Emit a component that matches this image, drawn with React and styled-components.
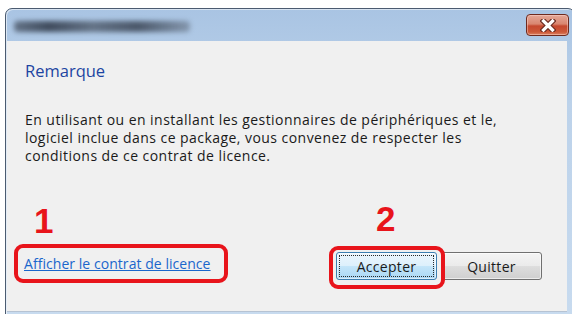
import styled, { createGlobalStyle } from 'styled-components';

const GlobalStyle = createGlobalStyle`
  html, body {
    margin: 0;
    padding: 0;
    background: #ffffff;
    overflow: hidden;
  }
  body {
    width: 572px;
    height: 314px;
    font-family: 'Open Sans', 'Noto Sans', sans-serif;
  }
`;

const App = () => {
  return (
    <>
      <GlobalStyle />
      <Screen>
        <Window>
          <TitleBar>
            <BlurredTitle aria-hidden="true" />
            <CloseButton aria-label="Fermer">
              <svg width="16" height="13" viewBox="0 0 16 13">
                <path
                  d="M3.5 2 L12.5 11 M12.5 2 L3.5 11"
                  stroke="#6b2c22"
                  strokeWidth="5.5"
                  strokeLinecap="square"
                />
                <path
                  d="M3.5 2 L12.5 11 M12.5 2 L3.5 11"
                  stroke="#ffffff"
                  strokeWidth="3.2"
                  strokeLinecap="square"
                />
              </svg>
            </CloseButton>
          </TitleBar>
          <Content>
            <Heading>Remarque</Heading>
            <Body>
              En utilisant ou en installant les gestionnaires de périphériques et le,
              <br />
              logiciel inclue dans ce package, vous convenez de respecter les
              <br />
              conditions de ce contrat de licence.
            </Body>
            <Footer>
              <Group offset={2}>
                <StepNumber indent={20}>1</StepNumber>
                <Highlight gap={6} pad="0 6px" width={214} height={39}>
                  <LicenseLink href="#">Afficher le contrat de licence</LicenseLink>
                </Highlight>
              </Group>
              <Group offset={0} spacing={101}>
                <StepNumber indent={47}>2</StepNumber>
                <ButtonRow>
                  <Highlight gap={10} pad="2px 4px 5px 3px">
                    <DialogButton primary>
                      <FocusRing>Accepter</FocusRing>
                    </DialogButton>
                  </Highlight>
                  <DialogButton side>
                    <span>Quitter</span>
                  </DialogButton>
                </ButtonRow>
              </Group>
            </Footer>
          </Content>
        </Window>
      </Screen>
    </>
  );
};

const Screen = styled.div`
  width: 572px;
  height: 314px;
  padding: 8px 0 0 5px;
  box-sizing: border-box;
  overflow: hidden;
`;

const Window = styled.div`
  width: 570px;
  height: 320px;
  box-sizing: border-box;
  border: 1px solid #4b5b70;
  border-radius: 7px 7px 0 0;
  background: linear-gradient(180deg, #a9c4e3 0%, #bcd2ea 30%, #c8dbef 100%);
  box-shadow: inset 1px 1px 0 rgba(255, 255, 255, 0.55);
  display: flex;
  flex-direction: column;
`;

const TitleBar = styled.div`
  height: 32px;
  display: flex;
  align-items: flex-start;
  justify-content: space-between;
  padding: 0 5px 0 8px;
`;

const BlurredTitle = styled.div`
  margin-top: 12px;
  width: 176px;
  height: 11px;
  border-radius: 4px;
  background: linear-gradient(
    90deg,
    rgba(60, 70, 85, 0.65) 0%,
    rgba(45, 55, 70, 0.85) 20%,
    rgba(70, 80, 95, 0.7) 45%,
    rgba(50, 60, 75, 0.8) 70%,
    rgba(85, 95, 110, 0.45) 100%
  );
  filter: blur(2.5px);
`;

const CloseButton = styled.button`
  margin-top: 5px;
  width: 43px;
  height: 22px;
  padding: 0;
  display: flex;
  align-items: center;
  justify-content: center;
  border: 1px solid #6e2a1e;
  border-radius: 4px;
  background: linear-gradient(
    180deg,
    #e4a797 0%,
    #d98670 45%,
    #c5482f 55%,
    #cc5838 85%,
    #dc8464 100%
  );
  box-shadow: inset 0 0 0 1px rgba(255, 220, 210, 0.45);
`;

const Content = styled.div`
  height: 271px;
  margin: 0 7px 0 1px;
  background: #f0f0f0;
  border-bottom: 1px solid #b6c3d3;
  box-sizing: border-box;
  padding: 18px 0 0 18px;
  display: flex;
  flex-direction: column;
`;

const Heading = styled.h1`
  margin: 0;
  font-size: 16.5px;
  line-height: 24px;
  font-weight: 400;
  color: #1d45a2;
`;

const Body = styled.p`
  margin: 28px 0 0;
  font-size: 14px;
  letter-spacing: 0.45px;
  line-height: 18px;
  color: #1a1a1a;
  white-space: nowrap;
`;

const Footer = styled.div`
  margin: 36px 0 0 -11px;
  display: flex;
  align-items: flex-start;
`;

const Group = styled.div`
  display: flex;
  flex-direction: column;
  align-items: flex-start;
  padding-top: ${({ offset }) => offset}px;
  margin-left: ${({ spacing }) => spacing || 0}px;
`;

const StepNumber = styled.div`
  padding-left: ${({ indent }) => indent}px;
  font-family: 'Liberation Sans', Arial, sans-serif;
  font-weight: 700;
  font-size: 35px;
  line-height: 35px;
  color: #e8141b;
`;

const Highlight = styled.div`
  position: relative;
  z-index: 1;
  margin-top: ${({ gap }) => gap}px;
  display: flex;
  align-items: center;
  width: ${({ width }) => (width ? `${width}px` : 'auto')};
  height: ${({ height }) => (height ? `${height}px` : 'auto')};
  box-sizing: border-box;
  padding: ${({ pad }) => pad};
  border: 4px solid #e8141b;
  border-radius: 9px;
`;

const LicenseLink = styled.a`
  font-size: 14px;
  letter-spacing: 0.05px;
  color: #1a66cc;
  text-decoration: underline;
  white-space: nowrap;
`;

const ButtonRow = styled.div`
  display: flex;
  align-items: flex-start;
`;

const DialogButton = styled.button`
  position: relative;
  z-index: 0;
  width: 101px;
  height: 28px;
  margin-top: ${({ side }) => (side ? 16 : 0)}px;
  margin-left: ${({ side }) => (side ? -4 : 0)}px;
  padding: 2px;
  box-sizing: border-box;
  font-family: 'Open Sans', 'Noto Sans', sans-serif;
  font-size: 14px;
  letter-spacing: 0.3px;
  color: #1a1a1a;
  border: 1px solid ${({ primary }) => (primary ? '#3c7fb1' : '#707070')};
  border-radius: 3px;
  display: flex;
  align-items: stretch;
  justify-content: center;
  background: ${({ primary }) =>
    primary
      ? 'linear-gradient(180deg, #ecf6fd 0%, #ddf0fc 48%, #c3e5f9 52%, #a9d7f4 100%)'
      : 'linear-gradient(180deg, #f4f4f4 0%, #ebebeb 48%, #dddddd 52%, #cfcfcf 100%)'};
  box-shadow: inset 0 0 0 1px rgba(255, 255, 255, 0.6);

  & > span {
    flex: 1;
    display: flex;
    align-items: center;
    justify-content: center;
  }
`;

const FocusRing = styled.span`
  border: 1px dotted #2a2a2a;
`;

export default App;
